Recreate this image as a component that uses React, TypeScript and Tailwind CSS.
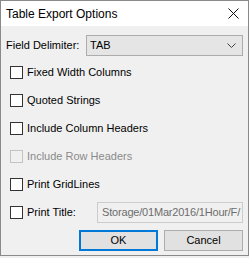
import React from "react";

const OPTIONS = [
  { label: "Fixed Width Columns", disabled: false },
  { label: "Quoted Strings", disabled: false },
  { label: "Include Column Headers", disabled: false },
  { label: "Include Row Headers", disabled: true },
  { label: "Print GridLines", disabled: false },
];

function CheckBox({ disabled }: { disabled?: boolean }) {
  return (
    <span
      className={`w-[13px] h-[13px] shrink-0 border ${
        disabled ? "border-[#c4c4c4] bg-[#f0f0f0]" : "border-[#333333] bg-white"
      }`}
    />
  );
}

export default function App() {
  return (
    <div
      className="w-[249px] h-[258px] bg-[#f0f0f0] text-[11px] text-black"
      style={{ fontFamily: '"Liberation Sans", Arial, sans-serif' }}
    >
      <div className="w-[249px] h-[256px] border border-[#8a8a8a] flex flex-col">
        {/* title bar */}
        <div className="h-[25px] bg-white flex items-center pl-[5px] pr-[9px]">
          <span className="flex-1 text-[12px]">Table Export Options</span>
          <svg width="11" height="11" viewBox="0 0 11 11">
            <path d="M0.5 0.5 L10.5 10.5 M10.5 0.5 L0.5 10.5" stroke="#111" strokeWidth="1" />
          </svg>
        </div>

        <div className="flex-1 flex flex-col px-[5px] pt-[9px]">
          {/* delimiter */}
          <div className="flex items-center h-[21px]">
            <span className="w-[80px]">Field Delimiter:</span>
            <div className="flex-1 h-[21px] bg-[#e5e5e5] border border-[#acacac] flex items-center pl-[3px] pr-[6px]">
              <span className="flex-1">TAB</span>
              <svg width="9" height="5" viewBox="0 0 9 5">
                <path d="M0.5 0.5 L4.5 4.5 L8.5 0.5" stroke="#444" fill="none" strokeWidth="1" />
              </svg>
            </div>
          </div>

          <div className="mt-[2px] flex flex-col pl-[4px]">
            {OPTIONS.map((o) => (
              <div key={o.label} className="h-[28px] flex items-center gap-[4px]">
                <CheckBox disabled={o.disabled} />
                <span className={o.disabled ? "text-[#8a8a8a]" : ""}>{o.label}</span>
              </div>
            ))}
            <div className="h-[28px] flex items-center gap-[4px]">
              <CheckBox />
              <span className="w-[66px]">Print Title:</span>
              <div className="flex-1 min-w-0 h-[21px] border border-[#cccccc] bg-[#f0f0f0] flex items-center justify-end pr-[2px] text-[#6d6d6d] whitespace-nowrap tracking-[-0.2px]">
                <span>Storage/01Mar2016/1Hour/F/</span>
              </div>
            </div>
          </div>

          {/* buttons */}
          <div className="mt-[4px] flex justify-end gap-[6px]">
            <button className="w-[79px] h-[21px] bg-[#e1e1e1] border-2 border-[#0078d7] text-[11px]">OK</button>
            <button className="w-[79px] h-[21px] bg-[#e1e1e1] border border-[#adadad] text-[11px]">Cancel</button>
          </div>
        </div>
      </div>
    </div>
  );
}
